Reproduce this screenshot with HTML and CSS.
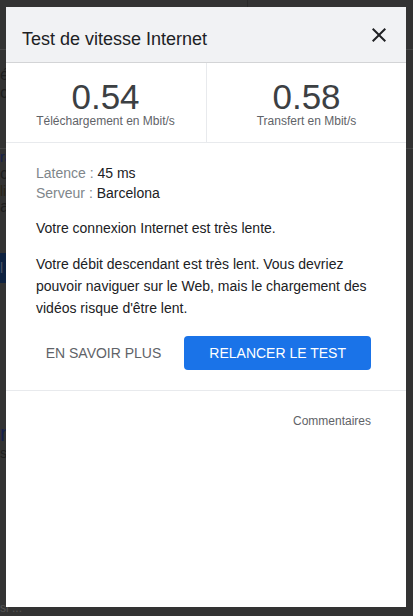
FILE: index.html
```html
<!DOCTYPE html>
<html lang="fr">
<head>
<meta charset="utf-8">
<title>Test de vitesse Internet</title>
<link rel="stylesheet" href="styles.css">
</head>
<body>
<div class="page" aria-hidden="true">
  <div class="pg-top"><div class="pg-top-left"></div></div>
  <div class="pg-line pg-l1">écran</div>
  <div class="pg-line pg-l2">cadre</div>
  <div class="pg-rule"></div>
  <div class="pg-line pg-l3 navy">rapide</div>
  <div class="pg-line pg-l4">cycle</div>
  <div class="pg-line pg-l5 brown">lien</div>
  <div class="pg-line pg-l6">avec</div>
  <div class="pg-box">l</div>
  <div class="pg-line pg-l7 navy">n</div>
  <div class="pg-line pg-l8">s</div>
  <div class="pg-line pg-l9">si ...</div>
</div>

<div class="dialog" role="dialog" aria-labelledby="dlg-title">
  <header class="dlg-header">
    <h1 class="dlg-title" id="dlg-title">Test de vitesse Internet</h1>
    <button class="close-btn" aria-label="Fermer">
      <svg viewBox="0 0 24 24" width="24" height="24"><path d="M19 6.41L17.59 5 12 10.59 6.41 5 5 6.41 10.59 12 5 17.59 6.41 19 12 13.41 17.59 19 19 17.59 13.41 12z" fill="#202124"/></svg>
    </button>
  </header>

  <section class="stats">
    <div class="stat stat-left">
      <div class="stat-value">0.54</div>
      <div class="stat-label">Téléchargement en Mbit/s</div>
    </div>
    <div class="stat">
      <div class="stat-value">0.58</div>
      <div class="stat-label">Transfert en Mbit/s</div>
    </div>
  </section>

  <section class="details">
    <div class="info">
      <div><span class="info-key">Latence : </span><span class="info-val">45 ms</span></div>
      <div><span class="info-key">Serveur : </span><span class="info-val">Barcelona</span></div>
    </div>
    <p class="status">Votre connexion Internet est très lente.</p>
    <p class="detail">Votre débit descendant est très lent. Vous devriez pouvoir naviguer sur le Web, mais le chargement des vidéos risque d'être lent.</p>
    <div class="actions">
      <button class="btn btn-text">En savoir plus</button>
      <button class="btn btn-primary">Relancer le test</button>
    </div>
  </section>

  <footer class="dlg-footer">
    <a class="feedback" href="#">Commentaires</a>
  </footer>
</div>
</body>
</html>
```

FILE: styles.css
```css
* { box-sizing: border-box; }

html, body {
  margin: 0;
  padding: 0;
}

body {
  width: 413px;
  height: 616px;
  overflow: hidden;
  position: relative;
  background: #333333;
  font-family: "Liberation Sans", Arial, sans-serif;
}

/* Background page (dimmed behind the modal) */
.page {
  display: flex;
  flex-direction: column;
  color: #1e1e1e;
}

.pg-top {
  height: 50px;
  border-bottom: 1px solid #454545;
  display: flex;
}

.pg-top-left {
  width: 248px;
  height: 8px;
  border-right: 1px solid #2a2a2a;
}

.pg-line {
  font-size: 16px;
  line-height: 18px;
  white-space: nowrap;
}

.pg-l1 { margin-top: 16px; }
.pg-l3 { font-size: 14px; line-height: 16px; }
.pg-l4 { font-size: 16px; }
.pg-l5 { font-size: 14px; line-height: 16px; }
.pg-l6 { font-size: 16px; line-height: 16px; }
.pg-l7 { margin-top: 140px; font-size: 22px; line-height: 22px; }
.pg-l8 { font-size: 14px; line-height: 16px; }
.pg-l9 { margin-top: 141px; font-size: 12px; line-height: 13px; color: #555555; }

.navy { color: #15204a; }
.brown { color: #2a2416; }

.pg-rule {
  margin-top: 46px;
  height: 1px;
  background: #444444;
}

.pg-box {
  margin-top: 38px;
  height: 30px;
  width: 40px;
  background: #0e2240;
  color: #4a5566;
  font-size: 14px;
  line-height: 30px;
}

/* Dialog */
.dialog {
  position: absolute;
  left: 6px;
  top: 7px;
  width: 400px;
  height: 600px;
  background: #ffffff;
  display: flex;
  flex-direction: column;
}

.dlg-header {
  height: 56px;
  flex-shrink: 0;
  background: #f1f2f4;
  border-bottom: 1px solid #d3d4d6;
  display: flex;
  align-items: center;
  justify-content: space-between;
  padding: 0 15px 0 16px;
}

.dlg-title {
  margin: 0;
  padding-top: 8px;
  font-size: 18px;
  line-height: 24px;
  font-weight: normal;
  color: #202124;
}

.close-btn {
  width: 24px;
  height: 24px;
  padding: 0;
  border: 0;
  background: none;
  display: flex;
}

.stats {
  display: grid;
  grid-template-columns: 201px 199px;
  border-bottom: 1px solid #e8eaed;
}

.stat {
  padding: 17px 0 13px;
  text-align: center;
}

.stat-left {
  border-right: 1px solid #e8eaed;
  padding-right: 1px;
}

.stat-value {
  font-size: 35px;
  line-height: 33px;
  color: #3c4043;
}

.stat-label {
  font-size: 12px;
  line-height: 16px;
  color: #5f6368;
}

.details {
  padding: 20px 35px 20px 30px;
  border-bottom: 1px solid #e8eaed;
  font-size: 14px;
  color: #202124;
}

.info {
  line-height: 20px;
}

.info-key { color: #80868b; }
.info-val { color: #202124; }

.status {
  margin: 15px 0 0;
  line-height: 20px;
}

.detail {
  margin: 15px 0 0;
  line-height: 22px;
}

.actions {
  margin-top: 17px;
  display: flex;
  justify-content: flex-end;
  align-items: center;
  gap: 13px;
}

.btn {
  height: 34px;
  flex-shrink: 0;
  white-space: nowrap;
  border: 0;
  font-family: "Liberation Sans", Arial, sans-serif;
  font-size: 14px;
  text-transform: uppercase;
  cursor: pointer;
}

.btn-text {
  padding: 0 10px;
  background: none;
  color: #5f6368;
}

.btn-primary {
  padding: 0 25px;
  background: #1a73e8;
  color: #ffffff;
  border-radius: 4px;
}

.dlg-footer {
  padding: 21px 35px 0;
  text-align: right;
  line-height: 16px;
}

.feedback {
  font-size: 12px;
  color: #5f6368;
  text-decoration: none;
}
```
